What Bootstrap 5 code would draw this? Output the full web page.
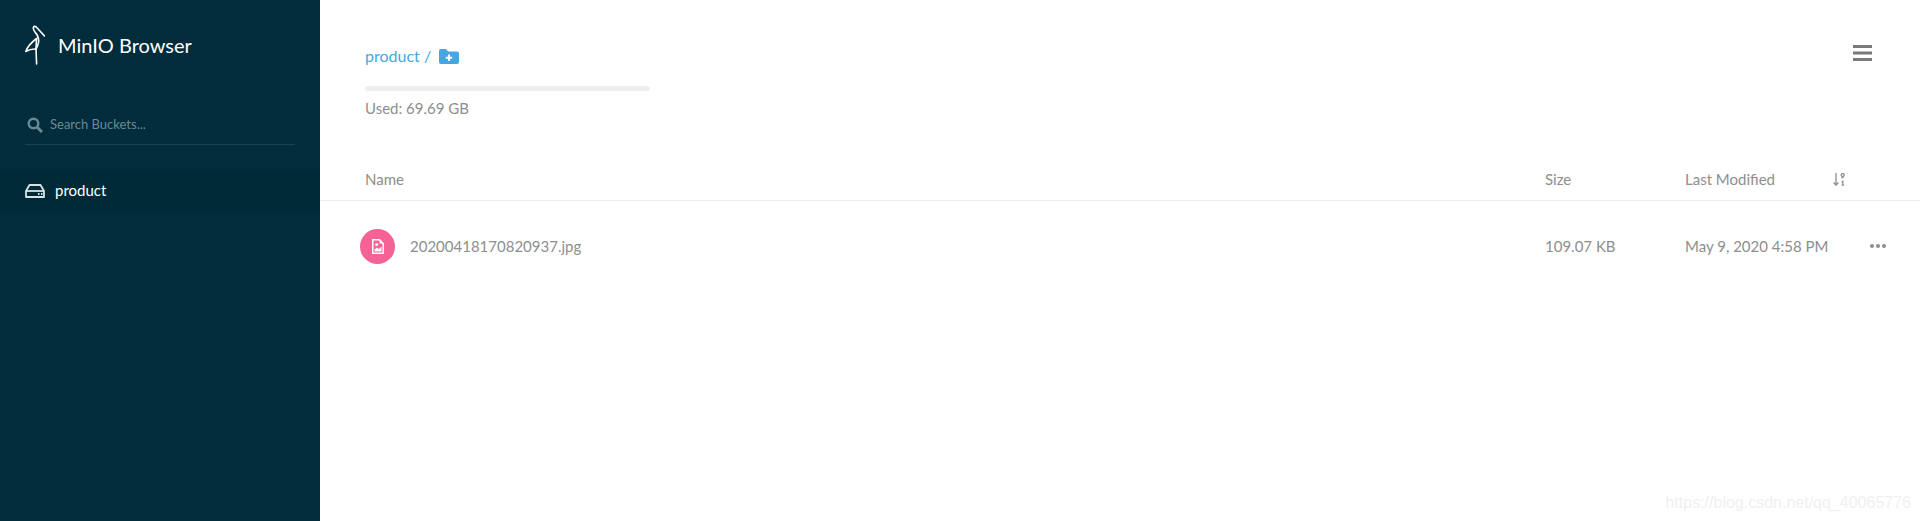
<!DOCTYPE html>
<html lang="en">
<head>
    <meta charset="UTF-8">
    <meta name="viewport" content="width=device-width, initial-scale=1.0">
    <title>MinIO Browser</title>
    <link href="https://cdn.jsdelivr.net/npm/bootstrap@5.3.0/dist/css/bootstrap.min.css" rel="stylesheet">
    <script src="https://cdn.jsdelivr.net/npm/bootstrap@5.3.0/dist/js/bootstrap.bundle.min.js"></script>
    <style>
        body { font-family: Lato, "Liberation Sans", sans-serif; font-size: 15px; color: #8e8e8e; background: #fff; }
        .page-wrap { height: 100vh; overflow: hidden; position: relative; }
        .side { width: 320px; background: #002c3b; flex-shrink: 0; }
        .side-head { height: 65px; padding: 25px 0 0 25px; }
        .side-title { color: #fff; font-size: 20px; line-height: 40px; margin-left: 13px; }
        .side-search { margin: 44px 25px 0; height: 36px; padding: 0 0 3px 2px; border-bottom: 1px solid rgba(255,255,255,.1); color: #6b8a94; font-size: 13px; }
        .search-label { margin-left: 7px; }
        .bucket { margin-top: 25px; height: 43px; padding: 0 0 2px 25px; background: #002a37; color: #fff; font-size: 15px; }
        .bucket-label { margin-left: 10px; }
        .main-area { min-width: 0; }
        .top-block { height: 158px; padding: 44px 48px 0 45px; }
        .crumb { color: #46a6e2; font-size: 16px; line-height: 24px; }
        .used-bar { width: 285px; height: 5px; background: #eee; border-radius: 3px; margin-top: 18px; }
        .used-text { font-size: 15px; line-height: 20px; margin-top: 7px; }
        .menu-btn { margin-top: 1px; }
        .file-head { height: 43px; padding-left: 45px; border-bottom: 1px solid #eee; font-size: 15px; }
        .file-row { height: 90px; padding-left: 40px; font-size: 15px; }
        .col-name { flex-grow: 1; min-width: 0; }
        .col-size { width: 140px; flex-shrink: 0; }
        .col-date { width: 148px; flex-shrink: 0; }
        .col-act { width: 87px; flex-shrink: 0; }
        .col-act-dots { padding-left: 37px; }
        .file-dot { width: 35px; height: 35px; border-radius: 50%; background: #f56295; margin-right: 15px; }
        .wmark { position: absolute; right: 9px; bottom: 8px; color: #f0f0f0; font-family: "Liberation Sans", sans-serif; font-size: 16px; line-height: 20px; }
    </style>
</head>
<body>
<div class="page-wrap d-flex">
    <aside class="side">
        <div class="side-head d-flex align-items-center">
            <svg width="20" height="40" viewBox="0 0 20 40" fill="none" stroke="#fff" stroke-width="1.6" stroke-linejoin="round" stroke-linecap="round">
                <path d="M19.5 11 L11 1.8 Q9 0.6 8.4 2.5 Q8 4.5 10 7 Q14.5 12 13.5 17.5 Q13 21 11 24 L11.6 39"/>
                <path d="M0.8 26.5 Q3 20 11.5 13.5 L11 24 Q6 23.5 0.8 26.5 Z"/>
            </svg>
            <span class="side-title">MinIO Browser</span>
        </div>
        <div class="side-search d-flex align-items-center">
            <svg width="16" height="16" viewBox="0 0 16 16" fill="none" stroke="#6b8a94" stroke-width="2.4"><circle cx="6.5" cy="6.5" r="4.8"/><path d="M10 10 L15 15" stroke-width="3"/></svg>
            <span class="search-label">Search Buckets...</span>
        </div>
        <div class="bucket d-flex align-items-center">
            <svg width="20" height="14" viewBox="0 0 20 14" fill="none" stroke="#d8e2e6" stroke-width="1.8" stroke-linejoin="round"><path d="M1 7 L4.5 1 H15.5 L19 7 V13 H1 Z"/><path d="M1 7 H19"/><path d="M13 10 h1.5 M16 10 h1.5" stroke-width="2"/></svg>
            <span class="bucket-label">product</span>
        </div>
    </aside>
    <main class="main-area flex-grow-1">
        <div class="top-block d-flex justify-content-between">
            <div>
                <div class="crumb d-flex align-items-center">
                    <span>product /</span>
                    <svg class="ms-2" width="20" height="15" viewBox="0 0 20 15"><path d="M0 2 Q0 0 2 0 H7 L9 2.5 H18 Q20 2.5 20 4.5 V13 Q20 15 18 15 H2 Q0 15 0 13 Z" fill="#46a6e2"/><path d="M10 5.5 V12 M6.8 8.8 H13.2" stroke="#fff" stroke-width="2"/></svg>
                </div>
                <div class="used-bar"></div>
                <div class="used-text">Used: 69.69 GB</div>
            </div>
            <svg class="menu-btn" width="19" height="16" viewBox="0 0 19 16" fill="#7a7a7a"><rect width="19" height="3"/><rect y="6.5" width="19" height="3"/><rect y="13" width="19" height="3"/></svg>
        </div>
        <div class="file-head d-flex align-items-center">
            <div class="col-name">Name</div>
            <div class="col-size">Size</div>
            <div class="col-date">Last Modified</div>
            <div class="col-act d-flex">
                <svg width="12" height="13" viewBox="0 0 12 13" fill="none" stroke="#8e8e8e" stroke-width="1.3"><path d="M3 0 V12 M0.6 9.5 L3 12.2 L5.4 9.5"/><circle cx="9.7" cy="2" r="1.5"/><path d="M8.6 5.2 L10.6 3.5 M8.6 12.2 H11 M9.8 12 V8.2 L8.6 9"/></svg>
            </div>
        </div>
        <div class="file-row d-flex align-items-center">
            <div class="col-name d-flex align-items-center">
                <div class="file-dot d-flex align-items-center justify-content-center">
                    <svg width="12" height="15" viewBox="0 0 12 15"><path d="M0.8 0.8 H7.5 L11.2 4.5 V14.2 H0.8 Z" fill="none" stroke="#fff" stroke-width="1.5"/><path d="M7.5 0.8 V4.5 H11.2" fill="#fff"/><circle cx="4.6" cy="5.4" r="1.5" fill="#fff"/><path d="M2.5 12.5 V10.5 L5 8.5 L7 10 L9.5 7.5 V12.5 Z" fill="#fff"/></svg>
                </div>
                <span>20200418170820937.jpg</span>
            </div>
            <div class="col-size">109.07 KB</div>
            <div class="col-date">May 9, 2020 4:58 PM</div>
            <div class="col-act col-act-dots d-flex">
                <svg width="16" height="4" viewBox="0 0 16 4" fill="#8e8e8e"><circle cx="2" cy="2" r="2"/><circle cx="8" cy="2" r="2"/><circle cx="14" cy="2" r="2"/></svg>
            </div>
        </div>
    </main>
    <div class="wmark">https://blog.csdn.net/qq_40065776</div>
</div>
</body>
</html>
